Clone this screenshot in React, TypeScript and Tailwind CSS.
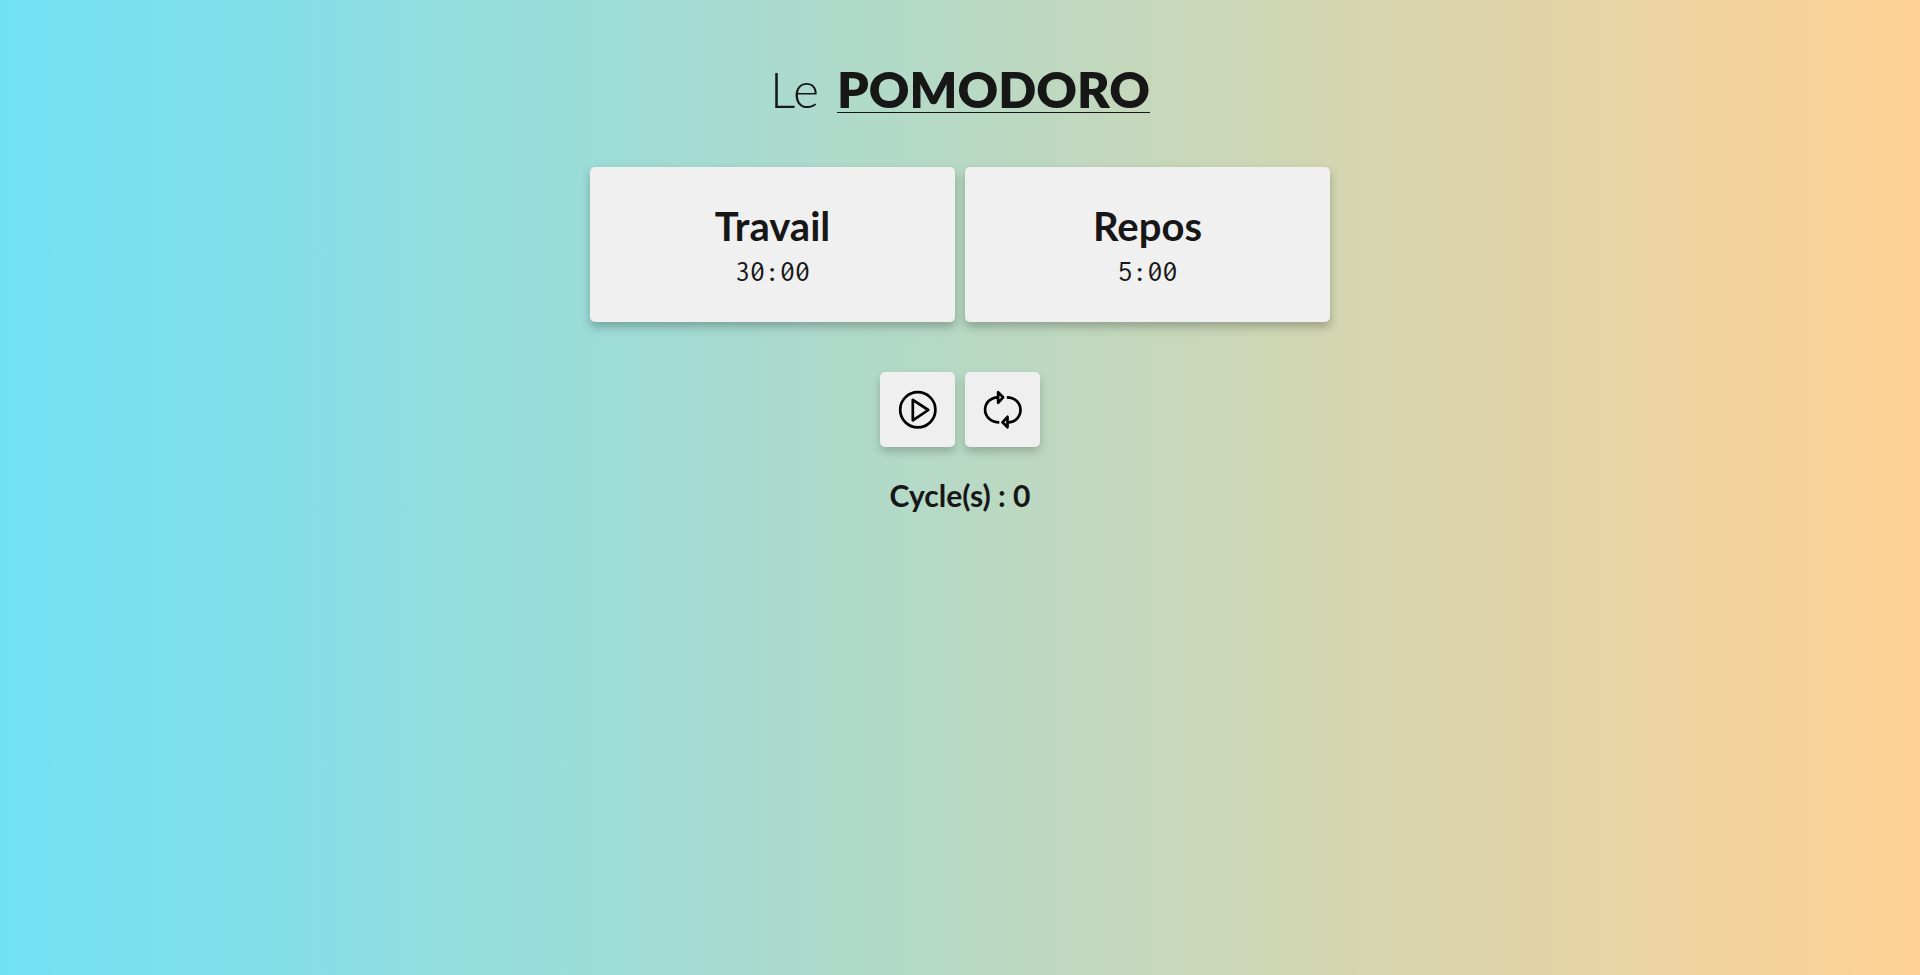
import { useEffect, useState } from "react";

const WORK = 1800;
const REST = 300;

function format(seconds: number) {
  return `${Math.floor(seconds / 60)}:${String(seconds % 60).padStart(2, "0")}`;
}

function TimerCard({ title, seconds }: { title: string; seconds: number }) {
  return (
    <section className="flex flex-1 flex-col items-center gap-[3px] rounded-[5px] bg-[#f0f0f0] px-5 pt-[35px] pb-8 shadow-[0_5px_10px_rgba(0,0,0,0.25)]">
      <h2 className="text-[40px] leading-12 font-bold">{title}</h2>
      <p className="font-['Inconsolata','Liberation_Mono',monospace] text-[30px] leading-[37px]">
        {format(seconds)}
      </p>
    </section>
  );
}

const buttonClass =
  "flex size-[75px] cursor-pointer items-center justify-center rounded-[5px] bg-[#efefef] text-black shadow-[0_5px_10px_rgba(0,0,0,0.2)]";

export default function App() {
  const [running, setRunning] = useState(false);
  const [work, setWork] = useState(WORK);
  const [rest, setRest] = useState(REST);
  const [cycles, setCycles] = useState(0);

  useEffect(() => {
    if (!running) return;
    const id = setTimeout(() => {
      if (work > 0) setWork(work - 1);
      else if (rest > 0) setRest(rest - 1);
      else {
        setWork(WORK);
        setRest(REST);
        setCycles(cycles + 1);
      }
    }, 1000);
    return () => clearTimeout(id);
  }, [running, work, rest, cycles]);

  const reset = () => {
    setRunning(false);
    setWork(WORK);
    setRest(REST);
    setCycles(0);
  };

  return (
    <main className="flex min-h-screen flex-col items-center bg-linear-to-r/srgb from-[#70e1f5] to-[#ffd194] px-5 pt-[60px] font-['Lato',sans-serif] text-[#171717]">
      <h1 className="flex items-baseline gap-[18px] text-[50px] leading-[58px] font-light">
        <span>Le</span>
        <span className="border-b border-[#171717] leading-[46px] font-extrabold">POMODORO</span>
      </h1>

      <div className="mt-[49px] flex w-full max-w-[740px] gap-2.5">
        <TimerCard title="Travail" seconds={work} />
        <TimerCard title="Repos" seconds={rest} />
      </div>

      <div className="mt-[50px] flex gap-2.5">
        <button type="button" aria-label="Démarrer" className={buttonClass} onClick={() => setRunning(!running)}>
          <svg viewBox="0.7 0.7 40 40" className="size-10" fill="none" stroke="currentColor" strokeWidth="2.7" strokeLinejoin="round">
            <circle cx="20.5" cy="20.5" r="17.6" />
            <path d="M15.5 10.5V31L31 20.700z" />
          </svg>
        </button>
        <button type="button" aria-label="Réinitialiser" className={buttonClass} onClick={reset}>
          <svg viewBox="0.7 0.7 40 40" className="size-10" fill="none" stroke="currentColor" strokeWidth="2.7" strokeLinejoin="round">
            <path d="M15.5 8C8 8.3 2.8 13.5 2.8 20.5S9 33 17 33" />
            <path d="M24.5 8C32.5 8 38.2 13.5 38.2 20.5S33 33 25.5 33" />
            <path d="M15.8 3v10.500l5-5.500z" />
            <path d="M25.2 27.5V38l-5-5z" />
          </svg>
        </button>
      </div>

      <p className="mt-[30px] text-[30px] leading-9 font-bold">Cycle(s) : {cycles}</p>
    </main>
  );
}
